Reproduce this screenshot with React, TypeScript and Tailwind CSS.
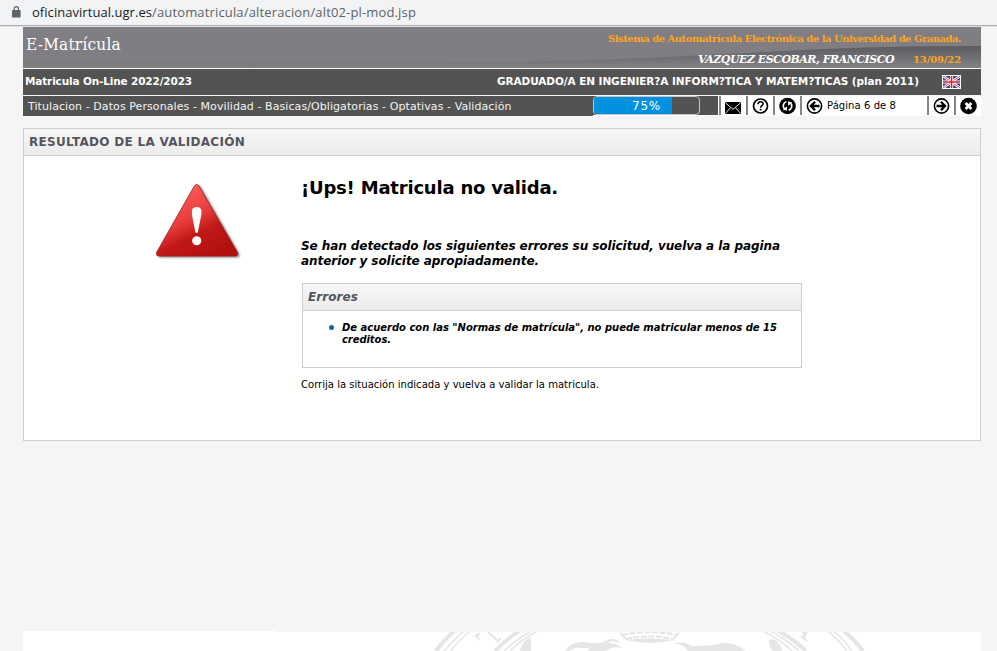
import { useLayoutEffect, useRef, useState } from "react";
import type { ReactNode } from "react";

type FitProps = { width: number; className?: string; children: string };

// Single line of text whose tracking is adjusted so that it spans a given width.
function Fit({ width, className = "", children }: FitProps) {
  const ref = useRef<HTMLSpanElement>(null);
  const [spacing, setSpacing] = useState(0);
  useLayoutEffect(() => {
    const el = ref.current;
    if (!el) return;
    setSpacing((width - el.getBoundingClientRect().width) / children.length);
  }, [width, children]);
  return (
    <span
      ref={ref}
      className={`inline-block whitespace-pre ${className}`}
      style={{ letterSpacing: `${spacing}px` }}
    >
      {children}
    </span>
  );
}

function Tool({ children, className = "w-[27px]" }: { children: ReactNode; className?: string }) {
  return (
    <div className={`flex h-5 shrink-0 items-start bg-white ${className}`}>
      <div className="h-[19px] w-[2px] shrink-0 bg-[#858585]" />
      {children}
    </div>
  );
}

const ring = "ml-1 mt-px h-[18px] w-[18px] shrink-0";

function EnvelopeIcon() {
  return (
    <svg className="ml-1 mt-[6px] h-3 w-4" viewBox="0 0 16 12">
      <rect width="16" height="12" rx="0.8" fill="#000" />
      <path d="M0.5 0.8 L8 7.4 L15.5 0.8 M0.5 11.3 L5.6 5.6 M15.5 11.3 L10.4 5.6" fill="none" stroke="#fff" strokeWidth="0.9" />
    </svg>
  );
}

function HelpIcon() {
  return (
    <svg className={ring} viewBox="0 0 18 18">
      <circle cx="8.5" cy="9" r="7" fill="#fff" stroke="#000" strokeWidth="1.7" />
      <path d="M6 7.3 C6 3.9 11.1 4 11.1 6.8 C11.1 8.6 8.6 8.6 8.6 10.7" fill="none" stroke="#000" strokeWidth="1.5" />
      <rect x="7.7" y="11.8" width="1.8" height="1.7" fill="#000" />
    </svg>
  );
}

function RefreshIcon() {
  return (
    <svg className={ring} viewBox="0 0 18 18">
      <circle cx="8.5" cy="9" r="8.3" fill="#000" />
      <path d="M7.4 4.8 A4.3 4.3 0 0 0 5.5 12 M9.6 13.2 A4.3 4.3 0 0 0 11.5 6" fill="none" stroke="#fff" strokeWidth="1.7" />
      <path d="M7.9 9.2 V13.8 L3.8 12.6 Z M9.1 8.8 V4.2 L13.2 5.4 Z" fill="#fff" />
    </svg>
  );
}

function ArrowIcon({ back = false }: { back?: boolean }) {
  return (
    <svg className={ring} viewBox="0 0 18 18">
      <circle cx="8.5" cy="9" r="7.1" fill="#fff" stroke="#000" strokeWidth="1.6" />
      <path
        d={back ? "M13.5 9 H5.5 M9.1 4.8 L4.9 9 L9.1 13.2" : "M3.5 9 H11.5 M7.9 4.8 L12.1 9 L7.9 13.2"}
        fill="none"
        stroke="#000"
        strokeWidth="2.3"
      />
    </svg>
  );
}

function CloseIcon() {
  return (
    <svg className={ring} viewBox="0 0 18 18">
      <circle cx="8.5" cy="9" r="8.3" fill="#000" />
      <path d="M5.6 6.1 L11.4 11.9 M11.4 6.1 L5.6 11.9" stroke="#fff" strokeWidth="2.8" />
    </svg>
  );
}

function Flag() {
  return (
    <svg className="h-[14px] w-[19px]" viewBox="0 0 19 14">
      <rect width="19" height="14" fill="#fff" />
      <rect x="1" y="1" width="17" height="12" fill="#29479c" />
      <path d="M1 1 L18 13 M18 1 L1 13" stroke="#fff" strokeWidth="2.6" />
      <path d="M1 1 L18 13 M18 1 L1 13" stroke="#dd3040" strokeWidth="0.9" />
      <path d="M9.5 1 V13 M1 7 H18" stroke="#fff" strokeWidth="3.2" />
      <path d="M9.500 1 V13 M1 7 H18" stroke="#e02030" strokeWidth="1.6" />
    </svg>
  );
}

function WarningTriangle() {
  return (
    <svg className="h-[83px] w-[91px]" viewBox="0 0 92 84">
      <defs>
        <linearGradient id="red" x1="0.25" y1="0.1" x2="0.75" y2="1">
          <stop offset="0" stopColor="#ff5a5a" />
          <stop offset="0.4" stopColor="#e83c3c" />
          <stop offset="0.62" stopColor="#c11818" />
          <stop offset="1" stopColor="#b01010" />
        </linearGradient>
        <filter id="soft" x="-10%" y="-10%" width="120%" height="120%">
          <feGaussianBlur stdDeviation="1.1" />
        </filter>
      </defs>
      <path d="M43 7 Q46 2.5 49 7 L87 73 Q89 78 84.5 78 H8.5 Q3.5 78 6 73 Z" fill="#555" opacity="0.7" filter="url(#soft)" transform="translate(1 .5)" />
      <path d="M42.6 6.5 Q45 2.5 47.7 6.5 L86 72.5 Q88 77 83.5 77 H7.5 Q3 77 5 72.5 Z" fill="url(#red)" stroke="#a01818" strokeWidth="0.8" />
      <path d="M40.3 31.5 C40.3 26 50 26 50 31.5 C50 37 47.5 46 46.3 53.5 H44 C42.8 46 40.3 37 40.3 31.5 Z" fill="#fff" />
      <circle cx="45.2" cy="61.5" r="4.6" fill="#fff" />
    </svg>
  );
}

// Top slice of the university seal used as a watermark.
function SealWatermark() {
  return (
    <svg className="ml-[407px] h-[19px] w-[460px]" viewBox="430 632 460 19">
      <g fill="none" stroke="#e6e6e6">
        <path d="M436 651 Q444 640 454 631" strokeWidth="4" />
        <path d="M444 651 Q453 641 463 632 M450 651 Q459 641 469 632" strokeWidth="1.6" />
        <path d="M475 637 L480 633 M476 634 L479 640 M488 632 L499 642 M497 643 L501 638" strokeWidth="2" />
        <path d="M495 651 Q508 638 519 631" strokeWidth="4" />
        <path d="M504 651 Q515 640 530 632 M510 651 Q521 640 537 631" strokeWidth="1.6" />
        <path d="M622 635 Q650 629 677 635 M626 639 Q650 634 673 639" strokeWidth="2.2" strokeDasharray="6 1.5" />
        <path d="M620 633 L627 640 M679 633 L672 640" strokeWidth="1.8" />
        <path d="M763 631 Q781 640 792 651 M770 631 Q789 641 799 651" strokeWidth="1.6" />
        <path d="M778 631 Q795 640 806 651" strokeWidth="4" />
        <path d="M828 631 Q839 640 847 651 M834 631 Q845 641 852 651" strokeWidth="1.6" />
        <path d="M844 631 Q855 640 863 651" strokeWidth="4" />
      </g>
      <g fill="#e6e6e6">
        <path d="M520 651 Q522 640 531 637 V651 Z" />
        <path d="M565 651 Q570 642 584 642 Q601 645 608 640 Q617 637 620 644 Q612 639 608 643 Q620 644 622 648 Q612 646 608 650 L604 651 H587 L590 648 H575 L569 651 Z" />
        <path d="M625 640 Q650 637 673 640 Q650 646 625 640 Z" />
        <path d="M674 643 Q684 641 692 646 Q711 646 724 643 Q737 643 745 651 H688 Q685 645 674 643 Z" />
        <path d="M769 640 Q778 636 782 651 H773 Q768 645 769 640 Z" />
        <path d="M802 632 H808 L805 637 L808 642 L799 637 L803 636 Z" />
      </g>
    </svg>
  );
}

export default function App() {
  return (
    <div className="flex h-[651px] w-[997px] flex-col overflow-hidden bg-[#f5f5f5] font-['DejaVu_Sans',Verdana,sans-serif] text-black">
      <div className="flex h-[27px] shrink-0 items-start border-b border-[#dedfe0] bg-[#f1f3f4]">
        <div className="flex h-[26px] w-full items-center border-b border-[#adb0b2] pl-3">
          <svg className="h-[13px] w-[9px]" viewBox="0 0 9 13">
            <rect y="4" width="8.6" height="7.5" rx="0.8" fill="#5f6368" />
            <path d="M2.2 4.5 V2.800 A2.1 2.1 0 0 1 6.400 2.800 V4.5" fill="none" stroke="#5f6368" strokeWidth="1.2" />
          </svg>
          <div className="mb-[2px] ml-[11px] flex font-['Open_Sans','Noto_Sans',sans-serif] text-[13px] leading-[18px]">
            <Fit width={120} className="text-[#202124]">oficinavirtual.ugr.es</Fit>
            <Fit width={264} className="text-[#5f6368]">/automatricula/alteracion/alt02-pl-mod.jsp</Fit>
          </div>
        </div>
      </div>

      <div className="ml-[23px] flex w-[958px] grow flex-col">
        <header className="grid h-[41px] shrink-0 bg-[#807e83]">
          <svg className="col-start-1 row-start-1 h-[41px] w-[958px]" viewBox="0 0 958 41">
            <defs>
              <linearGradient id="swoosh" x1="0" y1="19" x2="0" y2="41" gradientUnits="userSpaceOnUse">
                <stop offset="0" stopColor="#5c5b5f" />
                <stop offset="1" stopColor="#828185" />
              </linearGradient>
            </defs>
            <path d="M0 36 H420 C600 34 680 28 780 23 Q860 19 958 19 V41 H0 Z" fill="url(#swoosh)" />
          </svg>
          <div className="col-start-1 row-start-1 flex justify-between font-['Liberation_Serif',serif]">
            <div className="pl-[3px] pt-[6px] font-['DejaVu_Serif_Condensed','DejaVu_Serif',serif] text-[17px] leading-[22px] text-white">
              <Fit width={95}>E-Matrícula</Fit>
            </div>
            <div className="flex flex-col items-end pr-5 font-['DejaVu_Serif',serif] font-bold text-[#ffa51c]">
              <div className="mt-[5px] h-[14px] text-[10px] leading-[14px]">
                <Fit width={353}>Sistema de Automatrícula Electrónica de la Universidad de Granada.</Fit>
              </div>
              <div className="mt-[7px] flex h-[14px] gap-[19px] text-[11px] leading-[14px]">
                <Fit width={196} className="italic text-white">VAZQUEZ ESCOBAR, FRANCISCO</Fit>
                <Fit width={48} className="text-[10px]">13/09/22</Fit>
              </div>
            </div>
          </div>
        </header>

        <div className="mt-px flex h-[26px] shrink-0 items-center bg-[#535353] pl-[2px] pr-5 text-[10.5px] font-bold leading-[13px] text-white">
          <Fit width={167} className="mb-px">Matricula On-Line 2022/2023</Fit>
          <div className="ml-auto flex items-center">
            <Fit width={422} className="mb-px">GRADUADO/A EN INGENIER?A INFORM?TICA Y MATEM?TICAS (plan 2011)</Fit>
            <div className="ml-[23px]"><Flag /></div>
          </div>
        </div>

        <nav className="mt-px flex h-5 shrink-0 bg-[#535353]">
          <div className="w-[570px] pl-[5px] pt-1 text-[11px] leading-[14px] text-[#f2f2f2]">
            <Fit width={483.5}>Titulacion - Datos Personales - Movilidad - Basicas/Obligatorias - Optativas - Validación</Fit>
          </div>
          <div className="h-5 w-[125px] shrink-0 border-b border-white">
            <div className="flex h-[19px] w-[107px] overflow-hidden rounded-[4px] border border-[#c4c4c4]">
              <div className="flex w-[78px] justify-end bg-[#0092e1] pr-[11px] text-[12px] leading-[18px] text-white">
                <Fit width={29}>75%</Fit>
              </div>
            </div>
          </div>
          <div className="h-5 w-px shrink-0 bg-white" />
          <Tool><EnvelopeIcon /></Tool>
          <Tool><HelpIcon /></Tool>
          <Tool><RefreshIcon /></Tool>
          <Tool className="w-[127px]">
            <ArrowIcon back />
            <span className="ml-[3px] pt-[3px] text-[10px] leading-[13px]">
              <Fit width={69}>Página 6 de 8</Fit>
            </span>
          </Tool>
          <Tool><ArrowIcon /></Tool>
          <Tool><CloseIcon /></Tool>
        </nav>

        <main className="mt-3 h-[313px] shrink-0 border border-[#cfcfcf] bg-white">
          <h1 className="flex h-[27px] items-center border-b border-[#cfcfcf] bg-linear-to-b from-[#f7f7f7] to-[#ececec] pl-[5px] text-[12px] font-bold leading-[15px] text-[#555560]">
            <Fit width={216}>RESULTADO DE LA VALIDACIÓN</Fit>
          </h1>
          <div className="flex">
            <div className="w-[277px] shrink-0 pl-[128px] pt-6"><WarningTriangle /></div>
            <div className="w-[501px]">
              <h2 className="pt-[21px] text-[18px] font-bold leading-[22px]"><Fit width={257}>¡Ups! Matricula no valida.</Fit></h2>
              <div className="mt-10 flex flex-col items-start text-[12px] font-bold italic leading-[15px]">
                <Fit width={479}>Se han detectado los siguientes errores su solicitud, vuelva a la pagina</Fit>
                <Fit width={238}>anterior y solicite apropiadamente.</Fit>
              </div>
              <section className="ml-px mt-[14px] h-[85px] border border-[#cfcfcf] font-bold italic">
                <h3 className="flex h-[27px] items-center border-b border-[#cfcfcf] bg-linear-to-b from-[#f7f7f7] to-[#ececec] pl-[5px] text-[12px] leading-[15px] text-[#555560]">
                  <Fit width={50}>Errores</Fit>
                </h3>
                <div className="flex pl-[26px] pt-[11px] text-[10px] leading-3">
                  <div className="mt-[3px] h-[5px] w-[5px] rounded-full bg-[#1267a0]" />
                  <div className="ml-2 flex flex-col items-start">
                    <Fit width={435}>De acuerdo con las "Normas de matrícula", no puede matricular menos de 15</Fit>
                    <Fit width={49}>creditos.</Fit>
                  </div>
                </div>
              </section>
              <p className="mt-[10px] text-[10px] leading-[13px]">
                <Fit width={298}>Corrija la situación indicada y vuelva a validar la matricula.</Fit>
              </p>
            </div>
          </div>
        </main>

        <footer className="mt-auto flex h-5 shrink-0 flex-col bg-white">
          <div className="ml-[253px] h-px bg-[#f5f5f5]" />
          <SealWatermark />
        </footer>
      </div>
    </div>
  );
}
